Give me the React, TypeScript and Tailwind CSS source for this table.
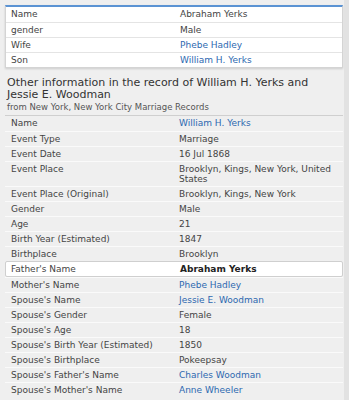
const FONT = { fontFamily: '"DejaVu Sans", Verdana, sans-serif' }

interface Row {
  label: string
  value: string
  link?: boolean
  hl?: boolean
}

const TOP: Row[] = [
  { label: 'Name', value: 'Abraham Yerks' },
  { label: 'gender', value: 'Male' },
  { label: 'Wife', value: 'Phebe Hadley', link: true },
  { label: 'Son', value: 'William H. Yerks', link: true },
]

const RECORD: Row[] = [
  { label: 'Name', value: 'William H. Yerks', link: true },
  { label: 'Event Type', value: 'Marriage' },
  { label: 'Event Date', value: '16 Jul 1868' },
  { label: 'Event Place', value: 'Brooklyn, Kings, New York, United States' },
  { label: 'Event Place (Original)', value: 'Brooklyn, Kings, New York' },
  { label: 'Gender', value: 'Male' },
  { label: 'Age', value: '21' },
  { label: 'Birth Year (Estimated)', value: '1847' },
  { label: 'Birthplace', value: 'Brooklyn' },
  { label: "Father's Name", value: 'Abraham Yerks', hl: true },
  { label: "Mother's Name", value: 'Phebe Hadley', link: true },
  { label: "Spouse's Name", value: 'Jessie E. Woodman', link: true },
  { label: "Spouse's Gender", value: 'Female' },
  { label: "Spouse's Age", value: '18' },
  { label: "Spouse's Birth Year (Estimated)", value: '1850' },
  { label: "Spouse's Birthplace", value: 'Pokeepsay' },
  { label: "Spouse's Father's Name", value: 'Charles Woodman', link: true },
  { label: "Spouse's Mother's Name", value: 'Anne Wheeler', link: true },
]

function Value({ row }: { row: Row }) {
  return (
    <span
      className={
        row.link
          ? 'text-[#2d68b0]'
          : row.hl
          ? 'font-bold text-[#222]'
          : 'text-[#444]'
      }
    >
      {row.value}
    </span>
  )
}

export default function App() {
  return (
    <div className="flex h-[400px] w-[349px] overflow-hidden bg-[#efefef]" style={FONT}>
      <div className="flex w-[344px] flex-col">
        {/* relatives card */}
        <div className="ml-[5px] mr-[1px] mt-[5px] border border-t-2 border-[#d4d4d4] border-t-[#5b93d3] bg-white shadow-[0_1px_2px_rgba(0,0,0,0.15)]">
          {TOP.map((row, i) => (
            <div
              key={i}
              className={`flex h-[15px] items-center text-[9px] leading-[11px] ${i > 0 ? 'border-t border-[#e4e4e4]' : ''}`}
            >
              <span className="w-[174px] pl-[5px] text-[#444]">{row.label}</span>
              <Value row={row} />
            </div>
          ))}
        </div>

        {/* heading */}
        <div className="px-[7px] pt-[9px]">
          <h2 className="text-[11px] leading-[12px] text-[#333]">
            Other information in the record of William H. Yerks and Jessie E. Woodman
          </h2>
          <p className="mt-[1px] text-[8.5px] leading-[11px] text-[#555]">
            from New York, New York City Marriage Records
          </p>
        </div>

        {/* record table */}
        <div className="ml-[5px] mr-[1px] mt-[2px] border-t border-[#cfcfcf]">
          {RECORD.map((row, i) => (
            <div
              key={i}
              className={
                row.hl
                  ? 'flex min-h-[15px] items-start rounded-[2px] border border-[#cfcfcf] bg-white py-[2px] text-[9px] leading-[10px]'
                  : `flex min-h-[15px] items-start py-[2px] text-[9px] leading-[10px] ${i > 0 ? 'border-t border-[#fafafa]' : ''}`
              }
            >
              <span className={`w-[174px] shrink-0 text-[#444] ${row.hl ? 'pl-[5px]' : 'pl-[6px]'}`}>{row.label}</span>
              <span className="pr-[6px]">
                <Value row={row} />
              </span>
            </div>
          ))}
        </div>
      </div>
      <div className="w-[5px] bg-[#e2e2e2]" />
    </div>
  )
}
